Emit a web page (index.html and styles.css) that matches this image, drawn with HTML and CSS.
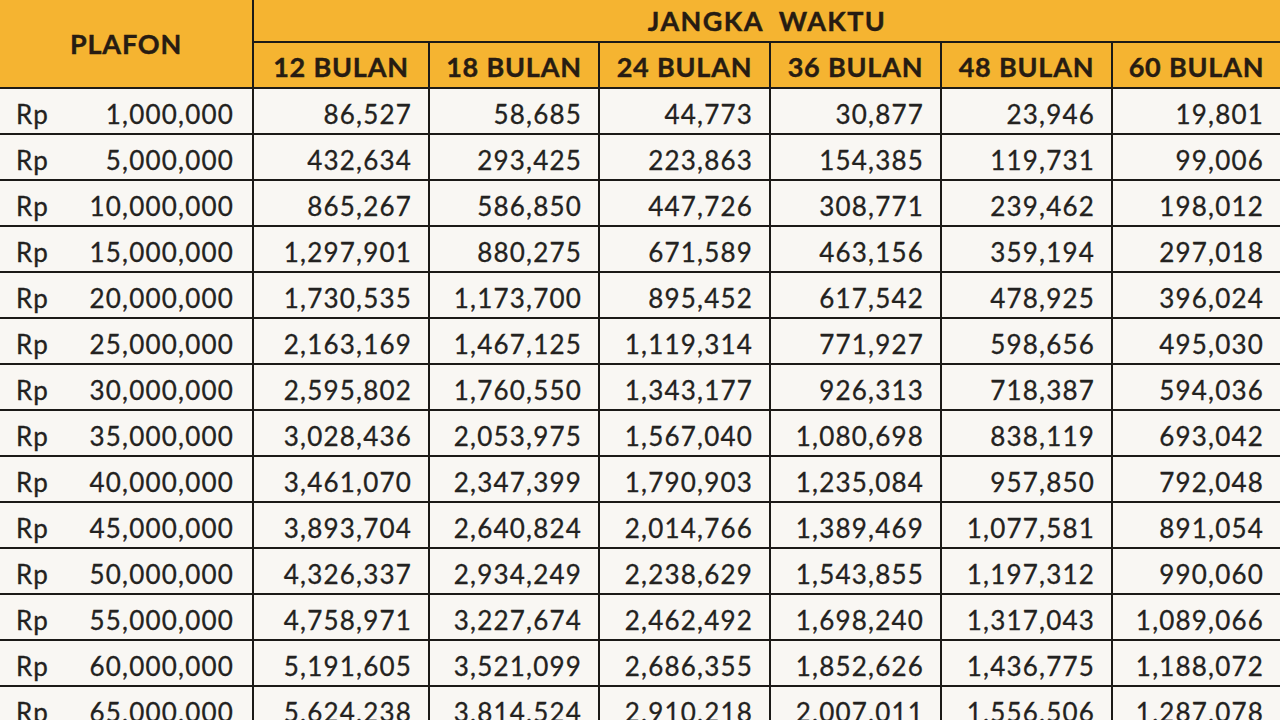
FILE: index.html
```html
<!DOCTYPE html>
<html lang="id">
<head>
<meta charset="utf-8">
<title>Tabel Angsuran</title>
<link rel="stylesheet" href="styles.css">
</head>
<body>
<table class="grid">
  <colgroup>
    <col class="c-plafon">
    <col class="c-12">
    <col class="c-18">
    <col class="c-24">
    <col class="c-36">
    <col class="c-48">
    <col class="c-60">
  </colgroup>
  <thead>
    <tr class="h1">
      <th class="plafon" rowspan="2">PLAFON</th>
      <th class="jangka" colspan="6">JANGKA&nbsp;&nbsp;WAKTU</th>
    </tr>
    <tr class="h2">
      <th>12 BULAN</th>
      <th>18 BULAN</th>
      <th>24 BULAN</th>
      <th>36 BULAN</th>
      <th>48 BULAN</th>
      <th>60 BULAN</th>
    </tr>
  </thead>
  <tbody>
    <tr><td class="amt"><div class="pl"><span>Rp</span><span>1,000,000</span></div></td><td>86,527</td><td>58,685</td><td>44,773</td><td>30,877</td><td>23,946</td><td>19,801</td></tr>
    <tr><td class="amt"><div class="pl"><span>Rp</span><span>5,000,000</span></div></td><td>432,634</td><td>293,425</td><td>223,863</td><td>154,385</td><td>119,731</td><td>99,006</td></tr>
    <tr><td class="amt"><div class="pl"><span>Rp</span><span>10,000,000</span></div></td><td>865,267</td><td>586,850</td><td>447,726</td><td>308,771</td><td>239,462</td><td>198,012</td></tr>
    <tr><td class="amt"><div class="pl"><span>Rp</span><span>15,000,000</span></div></td><td>1,297,901</td><td>880,275</td><td>671,589</td><td>463,156</td><td>359,194</td><td>297,018</td></tr>
    <tr><td class="amt"><div class="pl"><span>Rp</span><span>20,000,000</span></div></td><td>1,730,535</td><td>1,173,700</td><td>895,452</td><td>617,542</td><td>478,925</td><td>396,024</td></tr>
    <tr><td class="amt"><div class="pl"><span>Rp</span><span>25,000,000</span></div></td><td>2,163,169</td><td>1,467,125</td><td>1,119,314</td><td>771,927</td><td>598,656</td><td>495,030</td></tr>
    <tr><td class="amt"><div class="pl"><span>Rp</span><span>30,000,000</span></div></td><td>2,595,802</td><td>1,760,550</td><td>1,343,177</td><td>926,313</td><td>718,387</td><td>594,036</td></tr>
    <tr><td class="amt"><div class="pl"><span>Rp</span><span>35,000,000</span></div></td><td>3,028,436</td><td>2,053,975</td><td>1,567,040</td><td>1,080,698</td><td>838,119</td><td>693,042</td></tr>
    <tr><td class="amt"><div class="pl"><span>Rp</span><span>40,000,000</span></div></td><td>3,461,070</td><td>2,347,399</td><td>1,790,903</td><td>1,235,084</td><td>957,850</td><td>792,048</td></tr>
    <tr><td class="amt"><div class="pl"><span>Rp</span><span>45,000,000</span></div></td><td>3,893,704</td><td>2,640,824</td><td>2,014,766</td><td>1,389,469</td><td>1,077,581</td><td>891,054</td></tr>
    <tr><td class="amt"><div class="pl"><span>Rp</span><span>50,000,000</span></div></td><td>4,326,337</td><td>2,934,249</td><td>2,238,629</td><td>1,543,855</td><td>1,197,312</td><td>990,060</td></tr>
    <tr><td class="amt"><div class="pl"><span>Rp</span><span>55,000,000</span></div></td><td>4,758,971</td><td>3,227,674</td><td>2,462,492</td><td>1,698,240</td><td>1,317,043</td><td>1,089,066</td></tr>
    <tr><td class="amt"><div class="pl"><span>Rp</span><span>60,000,000</span></div></td><td>5,191,605</td><td>3,521,099</td><td>2,686,355</td><td>1,852,626</td><td>1,436,775</td><td>1,188,072</td></tr>
    <tr><td class="amt"><div class="pl"><span>Rp</span><span>65,000,000</span></div></td><td>5,624,238</td><td>3,814,524</td><td>2,910,218</td><td>2,007,011</td><td>1,556,506</td><td>1,287,078</td></tr>
  </tbody>
</table>
</body>
</html>
```

FILE: styles.css
```css
html, body {
  margin: 0;
  padding: 0;
  width: 1280px;
  height: 720px;
  overflow: hidden;
  background: #f8f6f2;
}

.grid {
  border-collapse: collapse;
  table-layout: fixed;
  width: 1280px;
  font-family: Lato, "Open Sans", sans-serif;
  color: #232220;
}

.c-plafon { width: 253px; }
.c-12 { width: 176px; }
.c-18 { width: 170px; }
.c-24 { width: 171px; }
.c-36 { width: 171px; }
.c-48 { width: 171px; }
.c-60 { width: 168px; }

.grid th,
.grid td {
  border: 2px solid #1c1a17;
  padding: 0;
}

.grid th:first-child,
.grid td:first-child {
  border-left: none;
}

.grid th:last-child,
.grid td:last-child {
  border-right: none;
}

.grid thead tr.h1 th {
  border-top: none;
}

.grid th {
  background: #f5b431;
  font-weight: 700;
  font-size: 27px;
  letter-spacing: 0.8px;
  text-align: center;
  color: #271c12;
  -webkit-text-stroke: 0.4px #271c12;
}

.h1 { height: 42px; }
.h2 { height: 46px; }

.h1 .jangka {
  line-height: 38px;
  padding-top: 2px;
  vertical-align: top;
  letter-spacing: 1.4px;
}

.h2 th {
  line-height: 40px;
  padding-top: 4px;
  vertical-align: top;
}

.plafon {
  vertical-align: middle;
  padding-bottom: 2px;
  letter-spacing: 1.2px;
}

.grid tbody tr { height: 46px; }

.grid td {
  background: #f9f7f3;
  font-size: 26px;
  letter-spacing: 1.2px;
  text-align: right;
  padding-right: 16px;
  line-height: 38px;
  padding-top: 6px;
  vertical-align: top;
  white-space: nowrap;
  -webkit-text-stroke: 0.3px #232220;
}

.grid td.amt {
  padding-left: 16px;
  padding-right: 18px;
}

.pl {
  display: flex;
  justify-content: space-between;
}
```
